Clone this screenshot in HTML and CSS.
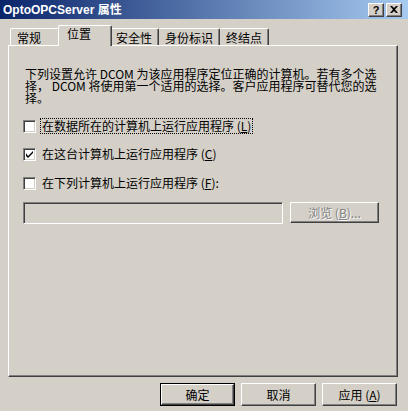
FILE: index.html
```html
<!DOCTYPE html>
<html lang="zh-CN">
<head>
<meta charset="utf-8">
<title>OptoOPCServer 属性</title>
<link rel="stylesheet" href="styles.css">
</head>
<body>
<div class="window">
  <div class="titlebar">
    <span class="title">OptoOPCServer <span class="cjk">属性</span></span>
    <div class="tbtns">
      <span class="tbtn help">?</span>
      <span class="tbtn close">
        <svg width="8" height="7" viewBox="0 0 8 7"><path d="M0 0h2l2 2 2-2h2L5 3.5 8 7H6L4 5 2 7H0l3-3.5z" fill="#000"/></svg>
      </span>
    </div>
  </div>
  <div class="tabs">
    <div class="tab">常规</div>
    <div class="tab active">位置</div>
    <div class="tab">安全性</div>
    <div class="tab">身份标识</div>
    <div class="tab">终结点</div>
  </div>
  <div class="panel">
    <p class="desc">下列设置允许 DCOM 为该应用程序定位正确的计算机。若有多个选择， DCOM 将使用第一个适用的选择。客户应用程序可替代您的选择。</p>
    <div class="opt opt1"><span class="cb"></span><span class="lbl focus">在数据所在的计算机上运行应用程序 (<u>L</u>)</span></div>
    <div class="opt opt2"><span class="cb checked"><svg width="7" height="7" viewBox="0 0 7 7"><path d="M0 2v3l2 2 5-5V0L2 5z" fill="#000"/></svg></span><span class="lbl">在这台计算机上运行应用程序 (<u>C</u>)</span></div>
    <div class="opt opt3"><span class="cb"></span><span class="lbl">在下列计算机上运行应用程序 (<u>F</u>):</span></div>
    <div class="browse-row">
      <div class="input"></div>
      <div class="btn disabled">浏览 (<u>B</u>)...</div>
    </div>
  </div>
  <div class="footer">
    <div class="btn default">确定</div>
    <div class="btn">取消</div>
    <div class="btn">应用 (<u>A</u>)</div>
  </div>
</div>
</body>
</html>
```

FILE: styles.css
```css
html, body {
  margin: 0;
  padding: 0;
  background: #d4d0c8;
}
body {
  width: 408px;
  height: 411px;
  overflow: hidden;
  font-family: "Noto Sans CJK SC", "DejaVu Sans", sans-serif;
  font-size: 12px;
  color: #000;
}
.window {
  width: 408px;
  height: 411px;
  display: flex;
  flex-direction: column;
}
.titlebar {
  height: 19px;
  flex: none;
  display: flex;
  align-items: center;
  justify-content: space-between;
  background: linear-gradient(to right, #0a246a, #a6caf0);
  padding: 0 6px 0 3px;
}
.title {
  font-family: "Liberation Sans", Arial, sans-serif;
  font-weight: bold;
  font-size: 12px;
  color: #fff;
  line-height: 19px;
}
.title .cjk {
  font-family: "Noto Sans CJK SC", sans-serif;
}
.tbtns {
  display: flex;
  gap: 2px;
}
.tbtn {
  width: 12px;
  height: 10px;
  background: #d4d0c8;
  border: 1px solid;
  border-color: #fff #404040 #404040 #fff;
  box-shadow: inset -1px -1px #808080;
  padding: 1px;
  display: flex;
  align-items: center;
  justify-content: center;
  font-family: "Liberation Sans", Arial, sans-serif;
  font-weight: bold;
  font-size: 11px;
  line-height: 10px;
  color: #000;
}
.tabs {
  height: 26px;
  flex: none;
  display: flex;
  align-items: flex-end;
  padding-left: 10px;
  position: relative;
  z-index: 2;
}
.tab {
  height: 16px;
  min-width: 36px;
  padding: 0 6px;
  line-height: 17px;
  border-top: 1px solid #fff;
  border-left: 1px solid #fff;
  border-right: 1px solid #404040;
  box-shadow: inset -1px 0 #808080;
  border-radius: 2px 2px 0 0;
  box-sizing: content-box;
  white-space: nowrap;
}
.tab + .tab {
  border-left: none;
}
.tab.active {
  height: 20px;
  margin: 0 -2px -1px -2px;
  padding: 0 8px;
  line-height: 15px;
  border-left: 1px solid #fff;
  background: #d4d0c8;
  position: relative;
  z-index: 1;
}
.panel {
  height: 308px;
  width: 374px;
  margin-left: 8px;
  flex: none;
  border-top: 1px solid #fff;
  border-left: 1px solid #fff;
  border-right: 1px solid #404040;
  border-bottom: 1px solid #404040;
  box-shadow: inset -1px -1px #808080;
  padding: 22px 0 0 14px;
  box-sizing: content-box;
  position: relative;
  z-index: 1;
}
.desc {
  margin: 0 0 0 2px;
  width: 352px;
  line-height: 12px;
  height: 36px;
}
.opt {
  display: flex;
  align-items: center;
  height: 16px;
}
.opt1 { margin-top: 14px; }
.opt2 { margin-top: 12px; }
.opt3 { margin-top: 13px; }
.cb {
  width: 9px;
  height: 9px;
  background: #fff;
  border: 1px solid;
  border-color: #808080 #fff #fff #808080;
  box-shadow: inset 1px 1px #404040, inset -1px -1px #d4d0c8;
  padding: 1px;
  margin-right: 4px;
  display: flex;
  align-items: center;
  justify-content: center;
  flex: none;
}
.lbl {
  padding: 0 1px;
  line-height: 14px;
  border: 1px solid transparent;
}
.lbl.focus {
  border: 1px dotted #000;
}
.browse-row {
  display: flex;
  gap: 7px;
  margin-top: 11px;
}
.input {
  width: 256px;
  height: 18px;
  border: 1px solid;
  border-color: #808080 #fff #fff #808080;
  box-shadow: inset 1px 1px #404040, inset -1px -1px #d4d0c8;
  padding: 1px;
  background: #d4d0c8;
}
.btn {
  width: 73px;
  height: 21px;
  border: 1px solid;
  border-color: #fff #404040 #404040 #fff;
  box-shadow: inset -1px -1px #808080;
  display: flex;
  align-items: center;
  justify-content: center;
  line-height: 14px;
  white-space: nowrap;
  flex: none;
}
.btn.disabled {
  width: 87px;
  height: 19px;
  color: #808080;
  text-shadow: 1px 1px #fff;
}
.footer {
  display: flex;
  justify-content: flex-end;
  gap: 6px;
  margin-top: 6px;
  padding-right: 11px;
}
.btn.default {
  width: 71px;
  height: 19px;
  outline: 1px solid #000;
  outline-offset: 0;
  margin: 1px;
}
u {
  text-decoration: underline;
}
```
